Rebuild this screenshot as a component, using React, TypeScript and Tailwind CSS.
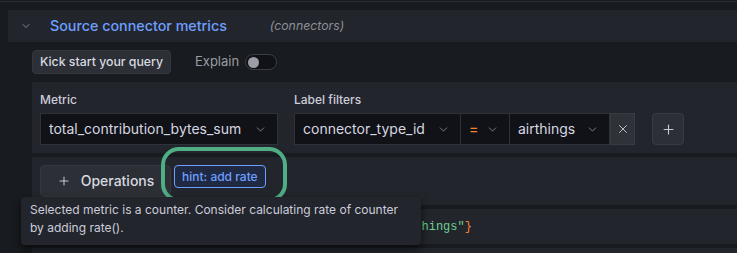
import { ChevronDown, Plus, X } from "lucide-react";

function Select({ text, width, orange }: { text: string; width: string; orange?: boolean }) {
  return (
    <div className={`${width} h-8 flex items-center justify-between bg-[#111217] border border-[#2f3238] pl-2 pr-[10px]`}>
      <span className={orange ? "text-[#f5832b] text-sm font-medium" : "text-[#d6d7e0] text-sm"}>{text}</span>
      <ChevronDown size={13} strokeWidth={1.6} className="text-[#8d8e96]" />
    </div>
  );
}

export default function App() {
  return (
    <div className="w-[737px] h-[253px] bg-[#181b1f] overflow-hidden relative font-['Inter','Noto_Sans',sans-serif]">
      <div className="h-px mt-px bg-[#2c2e34]" />
      {/* row header */}
      <div className="ml-2 mt-2 h-8 bg-[#22252b] flex items-center">
        <ChevronDown size={12} strokeWidth={1.8} className="ml-[12px] text-[#8d8e96]" />
        <span className="ml-[18px] text-[14.3px] font-medium text-[#6e9fff]">Source connector metrics</span>
        <span className="ml-[43px] text-[12.3px] italic text-[#8e8f98]">(connectors)</span>
      </div>

      <div className="pl-8">
        <div className="mt-2 h-6 flex items-center">
          <button className="h-6 w-[139px] bg-[#2c2f35] border border-[#34373d] rounded-sm text-[12.3px] font-medium text-[#d8d9e0]">
            Kick start your query
          </button>
          <span className="ml-6 text-[13px] text-[#9a9ba5]">Explain</span>
          <div className="ml-[6px] w-8 h-4 rounded-full border border-[#3a3d44] bg-[#111217] flex items-center pl-[2px]">
            <div className="w-[11px] h-[11px] rounded-full bg-[#9c9da6]" />
          </div>
        </div>

        {/* metric + label filters */}
        <div className="mt-2 h-[71px] bg-[#22252b] pl-2 pt-[10px] flex gap-4">
          <div className="flex flex-col">
            <span className="h-4 leading-4 text-xs font-medium text-[#ccccdc] mb-[5px]">Metric</span>
            <Select text="total_contribution_bytes_sum" width="w-[238px]" />
          </div>
          <div className="flex flex-col">
            <span className="h-4 leading-4 text-xs font-medium text-[#ccccdc] mb-[5px]">Label filters</span>
            <div className="flex items-center">
              <Select text="connector_type_id" width="w-[167px]" />
              <Select text="=" width="w-[50px] -ml-px" orange />
              <Select text="airthings" width="w-[101px] -ml-px" />
              <div className="w-[25px] h-8 bg-[#2f3239] border border-[#383b42] flex items-center justify-center">
                <X size={14} strokeWidth={1.6} className="text-[#c6c7d0]" />
              </div>
              <div className="ml-[17px] w-8 h-8 bg-[#2c2f36] border border-[#383b42] rounded-sm flex items-center justify-center">
                <Plus size={15} strokeWidth={1.8} className="text-[#c6c7d0]" />
              </div>
            </div>
          </div>
        </div>

        {/* operations */}
        <div className="mt-1 h-12 bg-[#22252b] pl-2 pt-2 flex items-start">
          <button className="w-[131px] h-8 bg-[#2c2f35] border border-[#34373d] rounded-sm flex items-center justify-center gap-[10px] text-sm font-medium text-[#d8d9e0]">
            <Plus size={14} strokeWidth={1.8} className="text-[#c6c7d0]" />
            Operations
          </button>
          <div className="ml-[3px] h-[23px] px-[7px] flex items-center border border-[#6e9fff] bg-[#1f2a42] rounded-sm text-xs font-medium text-[#6e9fff]">
            hint: add rate
          </div>
        </div>

        {/* code preview */}
        <div className="mt-1 h-[35px] bg-[#22252b] pl-[15px] flex items-center font-['Liberation_Mono',monospace] text-xs">
          <span className="text-[#ccccdc]">total_contribution_bytes_sum</span>
          <span className="text-[#f5832b]">{"{"}</span>
          <span className="text-[#ccccdc]">connector_type_id</span>
          <span className="text-[#ccccdc]">=</span>
          <span className="text-[#6ccf8e]">"airthings"</span>
          <span className="text-[#f5832b]">{"}"}</span>
        </div>
        <div className="mt-1 h-10 bg-[#22252b]" />
      </div>

      {/* highlight ring */}
      <div className="absolute left-[161px] top-[147px] w-[126px] h-[55px] border-4 border-[#4fae83] rounded-[18px]" />

      {/* tooltip */}
      <div className="absolute left-[21px] top-[197px] w-[400px] h-12 bg-[#22252b] shadow-[0_4px_8px_rgba(0,0,0,0.6)] rounded-sm px-[9px] pt-[4px] text-xs leading-[18px] text-[#ccccdc]">
        Selected metric is a counter. Consider calculating rate of counter
        <br />
        by adding rate().
      </div>
    </div>
  );
}
